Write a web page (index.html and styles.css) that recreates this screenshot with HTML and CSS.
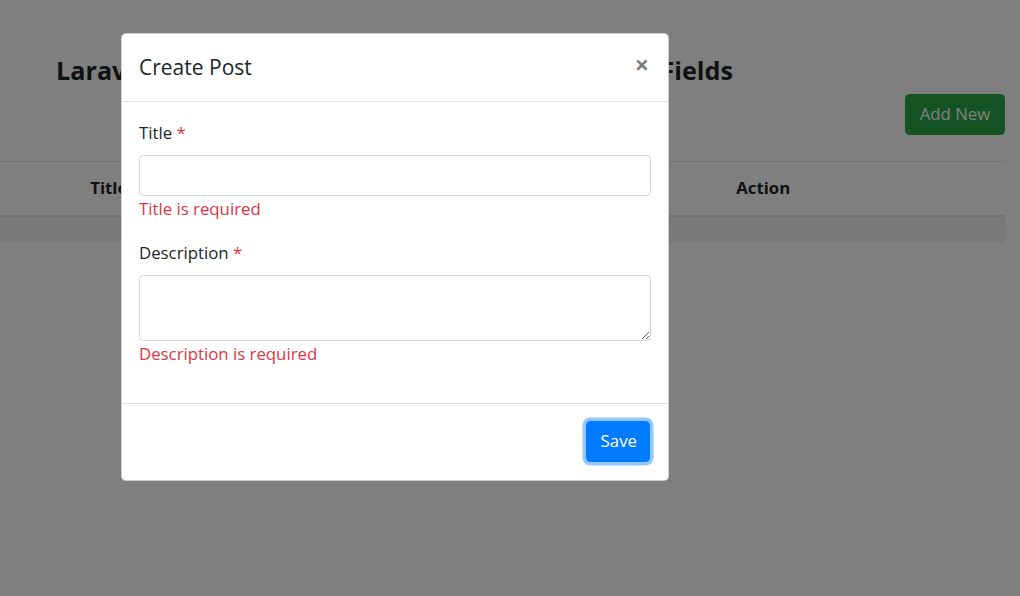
FILE: index.html
```html
<!DOCTYPE html>
<html lang="en">
<head>
<meta charset="utf-8">
<title>Create Post</title>
<link rel="stylesheet" href="styles.css">
</head>
<body>
  <div class="page">
    <h4 class="page-title"><span>Laravel Livewire</span><span>with Required Fields</span></h4>
    <div class="toolbar">
      <button class="btn btn-success" type="button">Add New</button>
    </div>
    <table class="table">
      <colgroup>
        <col class="col-no">
        <col class="col-title">
        <col class="col-desc">
        <col class="col-action">
      </colgroup>
      <thead>
        <tr><th></th><th>Title</th><th>Description</th><th>Action</th></tr>
      </thead>
      <tbody>
        <tr class="striped"><td colspan="4"></td></tr>
      </tbody>
    </table>
  </div>

  <div class="backdrop"></div>

  <div class="modal">
    <div class="modal-header">
      <h5 class="modal-title">Create Post</h5>
      <button class="close" type="button" aria-label="Close">×</button>
    </div>
    <div class="modal-body">
      <div class="form-group">
        <label class="label">Title <span class="req">*</span></label>
        <input class="form-control" type="text">
        <span class="error">Title is required</span>
      </div>
      <div class="form-group">
        <label class="label">Description <span class="req">*</span></label>
        <textarea class="form-control textarea"></textarea>
        <span class="error">Description is required</span>
      </div>
    </div>
    <div class="modal-footer">
      <button class="btn btn-primary btn-focus" type="button">Save</button>
    </div>
  </div>
</body>
</html>
```

FILE: styles.css
```css
* { box-sizing: border-box; }

html, body {
  margin: 0;
  padding: 0;
}

body {
  width: 1020px;
  height: 596px;
  overflow: hidden;
  background: #fff;
  color: #212529;
  font-family: "Open Sans", "Noto Sans", "Liberation Sans", sans-serif;
  font-size: 16.8px;
  line-height: 26.4px;
  position: relative;
}

/* ---------- background page ---------- */
.page {
  padding-right: 15px;
}

.page-title {
  margin: 54px 0 0 56px;
  width: 677px;
  font-size: 25.2px;
  line-height: 32px;
  font-weight: 700;
  white-space: nowrap;
  display: flex;
  justify-content: space-between;
}

.toolbar {
  display: flex;
  justify-content: flex-end;
  margin-top: 8px;
}

.btn {
  font-family: inherit;
  font-size: 16.8px;
  line-height: 26.4px;
  height: 41px;
  border: 1px solid transparent;
  border-radius: 4.4px;
  padding: 0 13.2px;
  cursor: pointer;
}

.btn-success {
  background: #28a745;
  border-color: #28a745;
  color: #fff;
  width: 100px;
}

.btn-primary {
  background: #007bff;
  border-color: #007bff;
  color: #fff;
  width: 64px;
}

.btn-focus {
  box-shadow: 0 0 0 3.5px rgba(38, 143, 255, 0.5);
}

.table {
  margin-top: 26px;
  width: 1005px;
  border-collapse: collapse;
  table-layout: fixed;
}

.col-no { width: 77px; }
.col-title { width: 323px; }
.col-desc { width: 323px; }
.col-action { width: 282px; }

.table th {
  text-align: left;
  font-weight: 700;
  padding: 13.2px;
  border-top: 1px solid #dee2e6;
  border-bottom: 2px solid #dee2e6;
  line-height: 26.4px;
}

.table td {
  padding: 13px;
  border-top: 1px solid #dee2e6;
}

.striped td {
  background: rgba(0, 0, 0, 0.05);
}

/* ---------- modal ---------- */
.backdrop {
  position: absolute;
  inset: 0;
  background: rgba(0, 0, 0, 0.5);
}

.modal {
  position: absolute;
  left: 121px;
  top: 33px;
  width: 548px;
  background: #fff;
  border: 1px solid rgba(0, 0, 0, 0.2);
  border-radius: 5px;
  display: flex;
  flex-direction: column;
}

.modal-header {
  display: flex;
  align-items: flex-start;
  justify-content: space-between;
  padding: 17px 17px;
  border-bottom: 1px solid #dee2e6;
}

.modal-title {
  margin: 0;
  font-size: 21px;
  line-height: 33px;
  font-weight: 500;
}

.close {
  background: transparent;
  border: 0;
  padding: 18px 19px 16px 17px;
  margin: -17px -17px -17px auto;
  font-family: inherit;
  font-size: 25px;
  font-weight: 700;
  line-height: 1;
  color: #000;
  opacity: 0.5;
  text-shadow: 0 1px 0 #fff;
  cursor: pointer;
}

.modal-body {
  padding: 17.6px 17px;
}

.form-group {
  display: flex;
  flex-direction: column;
  margin-bottom: 17.6px;
}

.label {
  margin-bottom: 8.8px;
}

.req,
.error {
  color: #dc3545;
}

.form-control {
  display: block;
  width: 100%;
  height: 41px;
  padding: 6.6px 13.2px;
  font-family: inherit;
  font-size: 16.8px;
  line-height: 26.4px;
  color: #495057;
  background: #fff;
  border: 1px solid #ced4da;
  border-radius: 4.4px;
  margin: 0;
}

.textarea {
  height: 66px;
  resize: vertical;
}

.modal-footer {
  display: flex;
  justify-content: flex-end;
  align-items: center;
  padding: 13.2px;
  border-top: 1px solid #dee2e6;
}

.modal-footer .btn {
  margin: 4.4px;
}
```
